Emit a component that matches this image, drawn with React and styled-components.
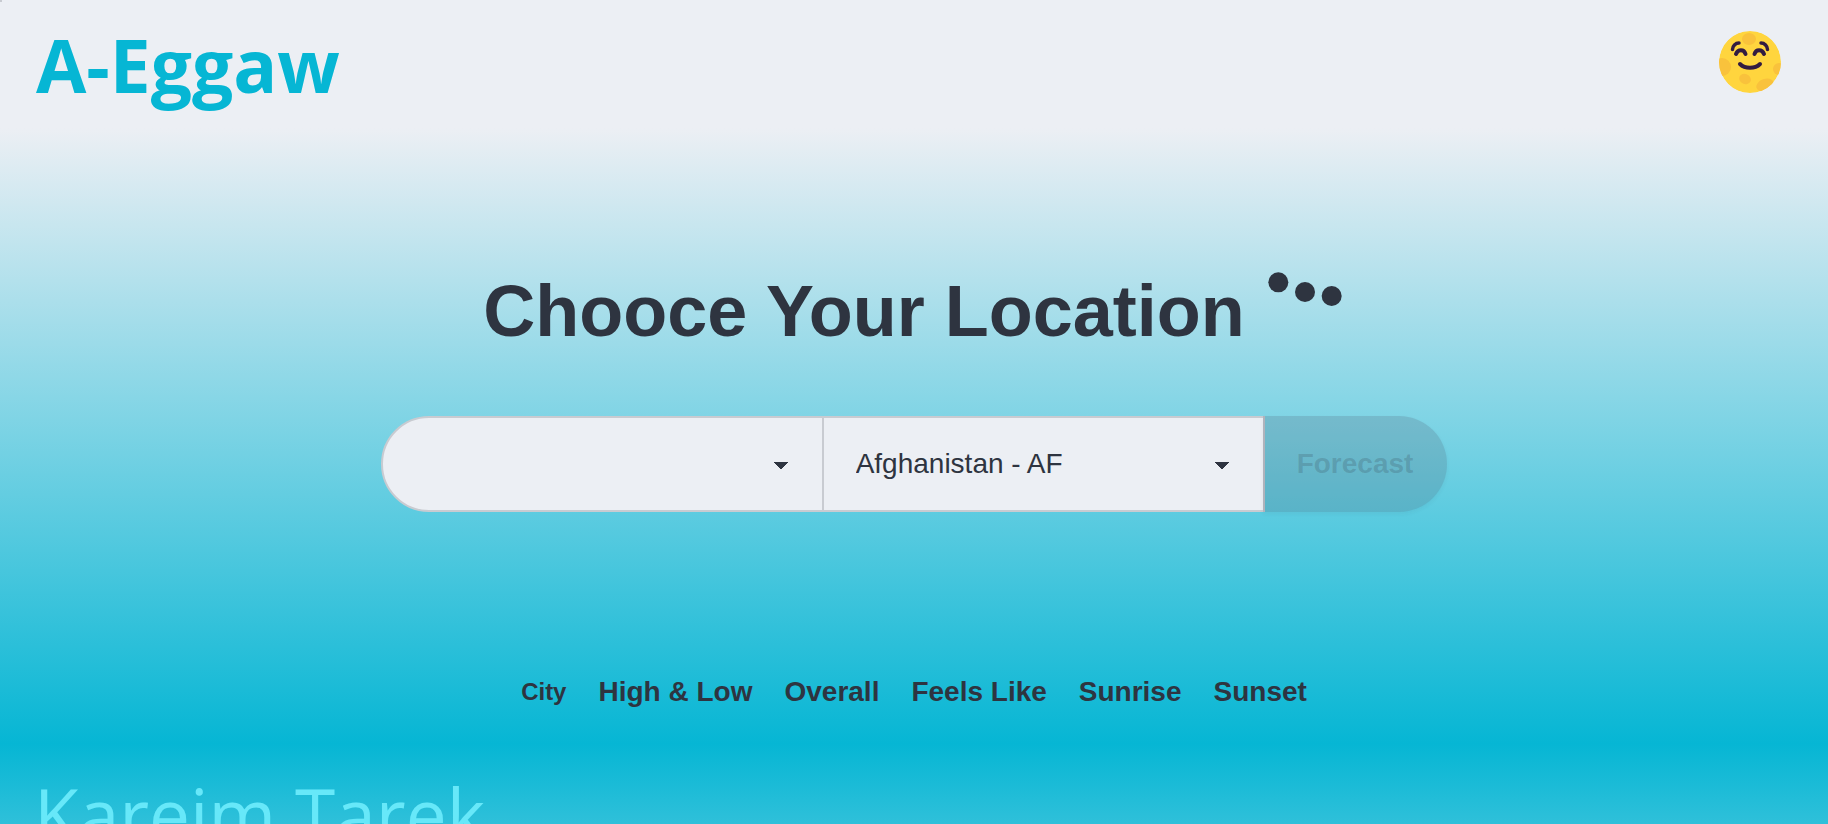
import React from "react";
import styled, { createGlobalStyle } from "styled-components";

const ink = "#2e3440";
const base = "#eceff4";
const line = "#c8cbd1";
const cyan = "#06b6d4";
const comic = `"Comic Sans MS", "Open Sans", sans-serif`;

const GlobalStyle = createGlobalStyle`
  *, *::before, *::after { box-sizing: border-box; }
  body {
    margin: 0;
    background: ${base};
    color: ${ink};
    font-family: "Liberation Sans", Arial, sans-serif;
  }
`;

const Page = styled.div`
  position: relative;
  display: flex;
  flex-direction: column;
  height: 100vh;
  overflow: hidden;
`;

const Corner = styled.span`
  position: absolute;
  top: 0;
  left: 0;
  width: 2px;
  height: 2px;
  background: ${line};
`;

const Header = styled.header`
  display: flex;
  flex: none;
  align-items: center;
  justify-content: space-between;
  height: 128px;
  padding: 0 47px 4px 36px;
`;

const Logo = styled.a`
  padding-top: 6px;
  color: ${cyan};
  font: bold 73px/88px ${comic};
  text-decoration: none;
`;

const MoodButton = styled.button`
  display: flex;
  padding: 0;
  border: 0;
  background: none;
  cursor: pointer;
`;

const Main = styled.main`
  display: flex;
  flex: none;
  flex-direction: column;
  align-items: center;
  padding: 128px 32px 32px;
  background: linear-gradient(${base}, ${cyan});
`;

const Title = styled.h1`
  margin: 0;
  font-size: 72px;
  line-height: 72px;
  white-space: nowrap;
`;

const Form = styled.form`
  display: flex;
  justify-content: center;
  width: 100%;
  margin-top: 69px;
`;

const Select = styled.select`
  flex: 0 1 443px;
  min-width: 0;
  height: 96px;
  margin: 0 0 0 ${(p) => (p.$first ? "0" : "-2px")};
  padding: 0 64px 0 32px;
  appearance: none;
  border: 2px solid ${line};
  border-radius: ${(p) => (p.$first ? "48px 0 0 48px" : "0")};
  color: ${ink};
  background-color: ${base};
  background-image:
    linear-gradient(to top right, transparent 50%, ${ink} 50%),
    linear-gradient(to top left, transparent 50%, ${ink} 50%);
  background-size: 7px 8px;
  background-repeat: no-repeat;
  background-position: right 41px top 44px, right 34px top 44px;
  font: 28px/40px "Liberation Sans", Arial, sans-serif;
`;

const Forecast = styled.button`
  height: 96px;
  margin-left: -2px;
  padding: 0 32px;
  border: 2px solid transparent;
  border-radius: 0 48px 48px 0;
  color: rgba(46, 52, 64, 0.2);
  background: rgba(76, 86, 106, 0.2) border-box;
  box-shadow: 0 2px 4px rgba(46, 52, 64, 0.06);
  font: bold 28px/40px "Liberation Sans", Arial, sans-serif;
`;

const Fields = styled.ul`
  display: flex;
  align-items: center;
  gap: 32px;
  margin: 160px 0 0;
  padding: 0;
  list-style: none;
`;

const Field = styled.li`
  font-size: ${(p) => (p.$small ? "24px" : "28px")};
  font-weight: bold;
  line-height: 40px;
`;

const Footer = styled.footer`
  flex: none;
  height: 450px;
  padding: 26px 34px;
  color: #67e8f9;
  background: linear-gradient(${cyan}, ${base});
  font: 73px/88px ${comic};
`;

const Moon = () => (
  <svg width="62" height="62" viewBox="0 0 62 62" aria-hidden="true">
    <defs>
      <clipPath id="moon">
        <circle cx="31" cy="31" r="31" />
      </clipPath>
    </defs>
    <g clipPath="url(#moon)">
      <circle cx="31" cy="31" r="31" fill="#ffd53e" />
      <g fill="#f9c23c">
        <ellipse cx="30" cy="8" rx="7" ry="6" />
        <circle cx="3" cy="36" r="9" />
        <circle cx="60" cy="38" r="6" />
        <ellipse cx="26" cy="48" rx="6" ry="5" transform="rotate(25 26 48)" />
        <ellipse cx="46" cy="54" rx="9" ry="6" transform="rotate(-20 46 54)" />
      </g>
    </g>
    <g fill="none" stroke="#321b41" strokeWidth="4" strokeLinecap="round">
      <path d="M13.5 18.5c0-3.500 3-6.500 6.500-6.500" strokeWidth="3.500" />
      <path d="M48.500 18.500c0-3.500-3-6.500-6.500-6.500" strokeWidth="3.500" />
      <path d="M17 23c2-5 8-5 9.500 0" />
      <path d="M35.500 23c1.500-5 7.500-5 9.500 0" />
      <path d="M21 33c5 5 15 5 20 0" />
    </g>
  </svg>
);

const Dots = () => (
  <svg width="80" height="80" viewBox="0 0 24 24" fill={ink} aria-hidden="true">
    <circle cx="4" cy="7.9" r="3" />
    <circle cx="12" cy="10.8" r="3" />
    <circle cx="20" cy="12" r="3" />
  </svg>
);

const fields = ["High & Low", "Overall", "Feels Like", "Sunrise", "Sunset"];

export default function App() {
  return (
    <>
      <GlobalStyle />
      <Page>
        <Corner />
        <Header>
          <Logo href="#">A-Eggaw</Logo>
          <MoodButton type="button" aria-label="Toggle theme">
            <Moon />
          </MoodButton>
        </Header>
        <Main>
          <Title>
            Chooce Your Location <Dots />
          </Title>
          <Form>
            <Select $first aria-label="City" defaultValue="">
              <option value="" />
            </Select>
            <Select aria-label="Country" defaultValue="AF">
              <option value="AF">Afghanistan - AF</option>
            </Select>
            <Forecast type="submit" disabled>
              Forecast
            </Forecast>
          </Form>
          <Fields>
            <Field $small>City</Field>
            {fields.map((name) => (
              <Field key={name}>{name}</Field>
            ))}
          </Fields>
        </Main>
        <Footer>Kareim Tarek</Footer>
      </Page>
    </>
  );
}
